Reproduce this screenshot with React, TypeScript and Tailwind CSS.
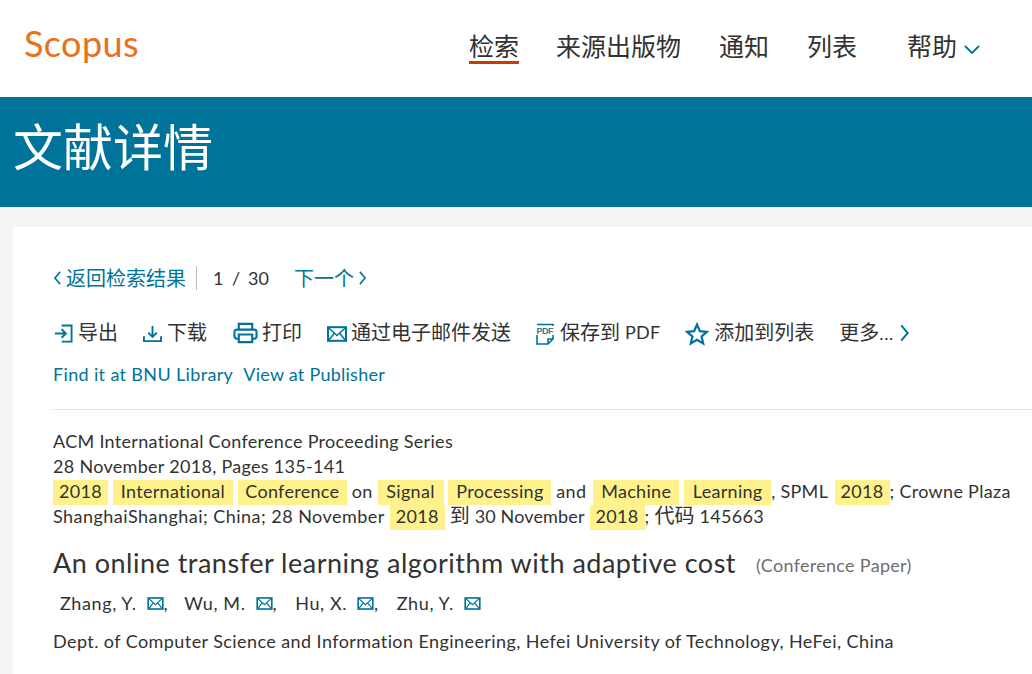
import React from "react";

const FONT = '"Lato","Noto Sans CJK SC",sans-serif';

function Mail({ className }: { className: string }) {
  return (
    <svg viewBox="0 0 20 16" className={className} fill="none" stroke="#00739a" aria-hidden="true">
      <rect x="1" y="1.2" width="18" height="13.600" strokeWidth="2" />
      <path d="M1.500 1.700 10 9.500 18.500 1.700M1.500 14.500 7.500 7M18.500 14.500 12.500 7" strokeWidth="1.500" />
    </svg>
  );
}

function Chevron({ dir, className }: { dir: "l" | "r" | "d"; className: string }) {
  const d = dir === "l" ? "M8 1 2 8l6 7" : dir === "r" ? "M2 1l6 7-6 7" : "M1 2l7 7 7-7";
  const vb = dir === "d" ? "0 0 16 11" : "0 0 10 16";
  return (
    <svg viewBox={vb} className={className} fill="none" stroke="#00739a" strokeWidth="1.800" aria-hidden="true">
      <path d={d} />
    </svg>
  );
}

function Hl({ children, className }: { children: React.ReactNode; className: string }) {
  return (
    <span className={`relative top-px inline-block h-[25px] bg-[#fff28c] text-center align-top leading-[23px] ${className}`}>
      {children}
    </span>
  );
}

function Cjk({ children }: { children: React.ReactNode }) {
  return <span className="text-[20px] leading-none tracking-normal">{children}</span>;
}

function Author({ name, comma, gap }: { name: string; comma?: boolean; gap: string }) {
  return (
    <span className={`flex items-center ${gap}`}>
      <span>{name}</span>
      <Mail className="ml-[10px] h-[13px] w-[17px]" />
      {comma && <span>,</span>}
    </span>
  );
}

export default function App() {
  return (
    <div className="h-[674px] w-[1032px] overflow-hidden bg-[#f4f4f4] text-[#323232]" style={{ fontFamily: FONT }}>
      <header className="flex h-[97px] items-start bg-white">
        <div className="ml-[24px] mt-[21px] w-[114px] text-[36px] leading-[44px] tracking-[0.4px] text-[#e9711c]">
          Scopus
        </div>
        <nav className="ml-[331px] mt-[29px] flex text-[25px] leading-[35px] text-[#323232]">
          <span className="h-[35px] border-b-[3px] border-[#c83c00]">检索</span>
          <span className="ml-[37px]">来源出版物</span>
          <span className="ml-[38px]">通知</span>
          <span className="ml-[38px]">列表</span>
          <span className="ml-[50px] flex items-center">
            帮助
            <Chevron dir="d" className="ml-[7px] mt-[6px] h-[11px] w-[16px]" />
          </span>
        </nav>
      </header>

      <div className="flex h-[110px] items-center bg-[#00739a] pb-[9px] pl-[13px] text-[50px] text-white">文献详情</div>

      <main className="ml-[13px] mt-[20px] h-[447px] bg-white pl-[40px] pt-[39px]">
        <div className="flex h-[24px] items-center text-[18px] text-[#00739a]">
          <Chevron dir="l" className="h-[14px] w-[9px]" />
          <span className="ml-[4px] text-[20px]">返回检索结果</span>
          <span className="ml-[10px] h-[24px] w-px bg-[#b9b9b9]" />
          <span className="ml-[16px] w-[9px] text-[#323232]">1</span>
          <span className="ml-[10px] w-[6px] text-[#323232]">/</span>
          <span className="ml-[10px] w-[20px] text-[#323232]">30</span>
          <span className="ml-[26px] text-[20px]">下一个</span>
          <Chevron dir="r" className="ml-[4px] h-[14px] w-[9px]" />
        </div>

        <div className="mt-[29px] flex h-[26px] items-center text-[20px] text-[#323232]">
          <svg viewBox="0 0 20 20" className="ml-[1px] mt-[2px] h-[19px] w-[19px]" fill="none" stroke="#00739a" strokeWidth="2" aria-hidden="true">
            <path d="M8 1.500h10.500v17H8M1 10h11M8 5.500l4.500 4.500L8 14.500" />
          </svg>
          <span className="ml-[5px]">导出</span>
          <svg viewBox="0 0 20 20" className="ml-[25px] mt-[2px] h-[19px] w-[19px]" fill="none" stroke="#00739a" strokeWidth="2" aria-hidden="true">
            <path d="M10 2v11M5.500 9l4.500 4.500L14.500 9M1 13v5h18v-5" />
          </svg>
          <span className="ml-[5px]">下载</span>
          <svg viewBox="0 0 26 22" className="ml-[26px] mt-[2px] h-[22px] w-[25px]" fill="none" stroke="#00739a" strokeWidth="2.200" aria-hidden="true">
            <path d="M6 7V1.500h14V7M6 17H4a2.500 2.500 0 0 1-2.500-2.500V10A2.500 2.500 0 0 1 4 7.500h18a2.500 2.500 0 0 1 2.500 2.500v4.500A2.500 2.500 0 0 1 22 17h-2M6 12.500h14v8H6z" />
          </svg>
          <span className="ml-[4px]">打印</span>
          <Mail className="ml-[25px] mt-[3px] h-[16px] w-[20px]" />
          <span className="ml-[4px]">通过电子邮件发送</span>
          <svg viewBox="0 0 18 22" className="ml-[25px] mt-[3px] h-[22px] w-[18px]" fill="none" stroke="#00739a" aria-hidden="true">
            <path d="M1 12v9h11l5-5V12M1 1.500h16V3" strokeWidth="1.600" />
            <path d="M12 21v-5h5" strokeWidth="1.600" />
            <text x="0.500" y="10.500" fontSize="9" fontWeight="700" textLength="17" fill="#4a6f88" stroke="none" fontFamily="Liberation Sans, sans-serif">PDF</text>
          </svg>
          <span className="ml-[6px]">保存到</span>
          <span className="ml-[5px] text-[18px] tracking-[0.2px]">PDF</span>
          <svg viewBox="0 0 24 24" className="ml-[25px] mt-[4px] h-[24px] w-[24px]" fill="none" stroke="#00739a" strokeWidth="2.200" aria-hidden="true">
            <path d="M12 2.500l2.900 6.600 7.100.7-5.400 4.700 1.600 7-6.200-3.700-6.200 3.700 1.600-7L2 9.800l7.100-.7z" />
          </svg>
          <span className="ml-[5px]">添加到列表</span>
          <span className="ml-[25px]">
            更多<span className="text-[18px] tracking-[0.6px]">...</span>
          </span>
          <Chevron dir="r" className="ml-[5px] mt-[1px] h-[18px] w-[11px]" />
        </div>

        <div className="mt-[17px] flex h-[25px] items-center text-[18px] tracking-[0.35px] text-[#00739a]">
          <span>Find it at BNU Library</span>
          <span className="ml-[10px] tracking-[0.25px]">View at Publisher</span>
        </div>

        <div className="mt-[22px] h-px bg-[#e4e4e4]" />

        <div className="mt-[19px] text-[18px] leading-[25px] tracking-[0.3px]">
          <div>ACM International Conference Proceeding Series</div>
          <div>28 November 2018, Pages 135-141</div>
          <div className="whitespace-nowrap">
            <Hl className="w-[55px]">2018</Hl> <Hl className="w-[120px]">International</Hl>{" "}
            <Hl className="w-[109px]">Conference</Hl> on <Hl className="w-[66px]">Signal</Hl>{" "}
            <Hl className="w-[103px]">Processing</Hl> and <Hl className="ml-[2px] w-[86px]">Machine</Hl>{" "}
            <Hl className="w-[87px]">Learning</Hl>, SPML <Hl className="ml-[2px] w-[55px]">2018</Hl>; Crowne Plaza
          </div>
          <div className="whitespace-nowrap">
            <span className="tracking-[0.47px]">ShanghaiShanghai; China; 28 November</span> <Hl className="w-[55px]">2018</Hl>{" "}
            <Cjk>到</Cjk> <span className="tracking-[0.15px]">30 November</span> <Hl className="w-[55px]">2018</Hl>;{" "}
            <Cjk>代码</Cjk> 145663
          </div>
        </div>

        <div className="mt-[18px] flex h-[32px] items-center">
          <span className="text-[27px] tracking-[0.5px]">An online transfer learning algorithm with adaptive cost</span>
          <span className="ml-[20px] mt-[4px] text-[18px] tracking-[0.3px] text-[#6e6e6e]">(Conference Paper)</span>
        </div>

        <div className="ml-[7px] mt-[12px] flex h-[24px] items-center text-[18px] tracking-[0.6px]">
          <Author name="Zhang, Y." comma gap="mr-[16px]" />
          <Author name="Wu, M." comma gap="mr-[18px]" />
          <Author name="Hu, X." comma gap="mr-[18px]" />
          <Author name="Zhu, Y." gap="" />
        </div>

        <div className="mt-[14px] text-[18px] leading-[25px] tracking-[0.42px]">
          Dept. of Computer Science and Information Engineering, Hefei University of Technology, HeFei, China
        </div>
      </main>
    </div>
  );
}
